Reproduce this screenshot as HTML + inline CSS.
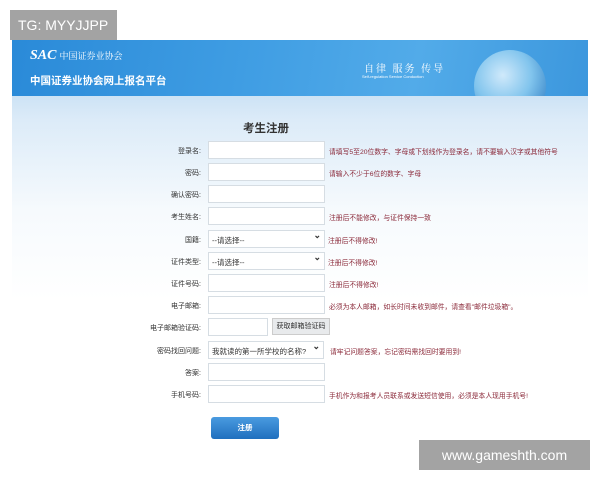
<!DOCTYPE html>
<html><head><meta charset="utf-8"><style>
*{margin:0;padding:0;box-sizing:border-box}
body{width:600px;height:480px;background:#fff;position:relative;overflow:hidden;font-family:"Liberation Sans","Noto Sans CJK SC",sans-serif}
.tg{position:absolute;left:10px;top:10px;width:107px;height:30px;background:#a3a3a3;color:#fff;font-size:14px;line-height:30px;padding-left:8px}
.main{position:absolute;left:12px;top:40px;width:576px;height:430px;background:linear-gradient(#cde3f5 56px,#dcebf8 80px,#f6fafd 170px,#fff 260px)}
.hdr{position:absolute;left:0;top:0;width:576px;height:56px;overflow:hidden;background:linear-gradient(100deg,#2a8ad8 0%,#3f9de3 40%,#52abe9 70%,#3c97dd 100%)}
.globe{position:absolute;left:462px;top:10px;width:72px;height:72px;border-radius:50%;background:radial-gradient(circle at 40% 35%,#e8f6ff,#8ccbef 45%,#3e88c8 80%);opacity:.85}
.t1{position:absolute;left:18px;top:8px;color:#fff;font:italic bold 14px "Liberation Serif",serif}
.t1 span{font:9px "Noto Serif CJK SC",serif;font-style:normal;font-weight:normal;margin-left:3px}
.t2{position:absolute;left:18px;top:33px;color:#fff;font-size:10.5px;font-weight:bold}
.t3{position:absolute;left:352px;top:20px;color:#fff;font-size:10px;letter-spacing:2px;font-family:"Noto Serif CJK SC",serif}
.t4{position:absolute;left:350px;top:34px;color:#fff;font-size:4px}
h1{position:absolute;left:231px;top:80px;font-size:11.5px;color:#333;font-weight:bold}
.row{position:absolute;left:0;width:576px;height:18px}
.lb{position:absolute;right:387px;top:5px;font-size:7px;color:#333;white-space:nowrap}
.in{position:absolute;left:196px;top:0;width:117px;height:18px;background:#fff;border:1px solid #d6dde3}
.sel{font-size:7.5px;color:#333;padding:4px 0 0 3px}
.sel:after{content:"⌄";position:absolute;right:3px;top:-1px;font-size:9px;font-weight:bold}
.ht{position:absolute;left:317px;top:5px;font-size:6.8px;color:#8b2a3a;white-space:nowrap}
.btn{position:absolute;left:260px;top:0;width:58px;height:17px;background:#e8eaec;border:1px solid #ccc;font-size:7px;color:#333;text-align:center;line-height:15px}
.reg{position:absolute;left:199px;top:377px;width:68px;height:22px;border-radius:3px;background:linear-gradient(#4a9be0,#1f6fbe);color:#fff;font-size:7.5px;font-weight:bold;text-align:center;line-height:22px}
.wm{position:absolute;left:419px;top:440px;width:171px;height:30px;background:#a3a3a3;color:#fff;font-size:14px;line-height:30px;text-align:center}
</style></head><body>
<div class="tg">TG: MYYJJPP</div>
<div class="main">
<div class="hdr"><div class="globe"></div>
<div class="t1">SAC<span>中国证券业协会</span></div>
<div class="t2">中国证券业协会网上报名平台</div>
<div class="t3">自律 服务 传导</div>
<div class="t4">Self-regulation Service Conduction</div>
</div>
<h1>考生注册</h1>
<div class="row" style="top:101px"><div class="lb">登录名:</div><div class="in"></div><div class="ht">请填写5至20位数字、字母或下划线作为登录名，请不要输入汉字或其他符号</div></div>
<div class="row" style="top:123px"><div class="lb">密码:</div><div class="in"></div><div class="ht">请输入不少于6位的数字、字母</div></div>
<div class="row" style="top:145px"><div class="lb">确认密码:</div><div class="in"></div></div>
<div class="row" style="top:167px"><div class="lb">考生姓名:</div><div class="in"></div><div class="ht">注册后不能修改，与证件保持一致</div></div>
<div class="row" style="top:190px"><div class="lb">国籍:</div><div class="in sel">--请选择--</div><div class="ht" style="left:316px">注册后不得修改!</div></div>
<div class="row" style="top:212px"><div class="lb">证件类型:</div><div class="in sel">--请选择--</div><div class="ht" style="left:316px">注册后不得修改!</div></div>
<div class="row" style="top:234px"><div class="lb">证件号码:</div><div class="in"></div><div class="ht">注册后不得修改!</div></div>
<div class="row" style="top:256px"><div class="lb">电子邮箱:</div><div class="in"></div><div class="ht">必须为本人邮箱，如长时间未收到邮件，请查看"邮件垃圾箱"。</div></div>
<div class="row" style="top:278px"><div class="lb">电子邮箱验证码:</div><div class="in" style="width:60px"></div><div class="btn">获取邮箱验证码</div></div>
<div class="row" style="top:301px"><div class="lb">密码找回问题:</div><div class="in sel" style="width:116px">我就读的第一所学校的名称?</div><div class="ht" style="left:318px">请牢记问题答案，忘记密码需找回时要用到!</div></div>
<div class="row" style="top:323px"><div class="lb">答案:</div><div class="in"></div></div>
<div class="row" style="top:345px"><div class="lb">手机号码:</div><div class="in"></div><div class="ht">手机作为和报考人员联系或发送短信使用，必须是本人现用手机号!</div></div>
<div class="reg">注册</div>
</div>
<div class="wm">www.gameshth.com</div>
</body></html>
